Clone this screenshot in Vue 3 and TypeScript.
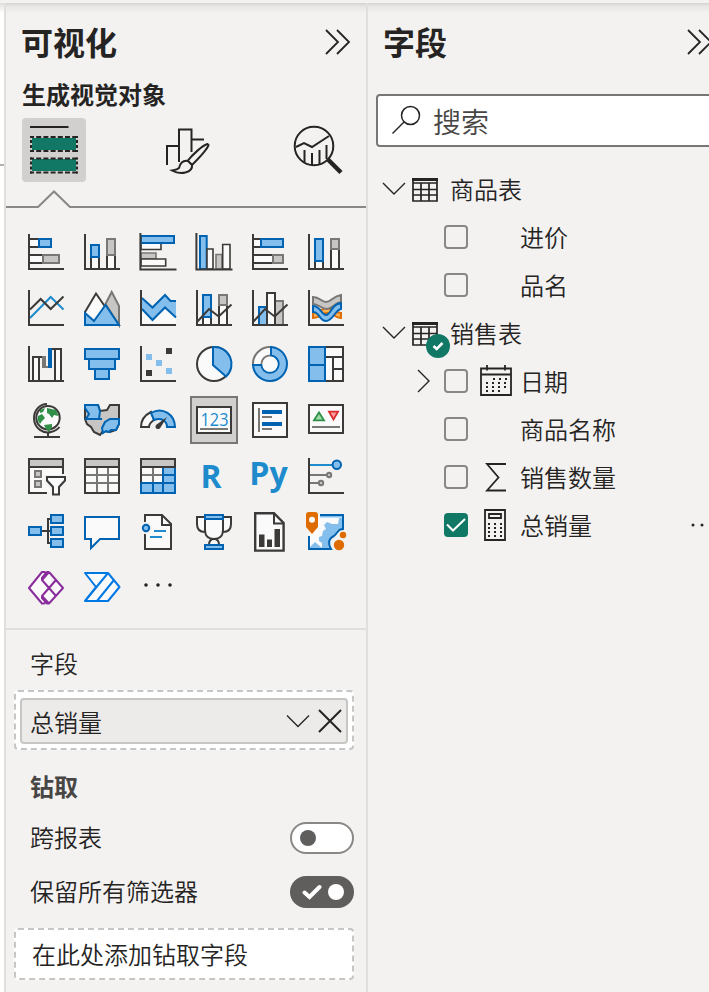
<script setup lang="ts">
import { ref } from 'vue'

type Shape = [cls: string, d: string]
interface Visual {
  name: string
  shapes: Shape[]
  label?: { text: string; x: number; y: number; size: number; width: number; weight: number }
}
interface Field {
  name: string
  icon?: 'date' | 'sum' | 'calc'
  expandable?: boolean
  checked?: boolean
}
interface Table {
  name: string
  used: boolean
  fields: Field[]
}

const box = (x1: number, y1: number, x2: number, y2: number): string =>
  `M${x1} ${y1}H${x2}V${y2}H${x1}Z`
const dot = (x: number, y: number, r: number): string =>
  `M${x - r} ${y}a${r} ${r} 0 1 0 ${2 * r} 0a${r} ${r} 0 1 0 ${-2 * r} 0Z`
const axis: Shape = ['dark', 'M7 6V41H42']
const axisWide: Shape = ['dark', 'M6.4 5V41.5H42.5']

const visuals: Visual[] = [
  { name: 'stacked-bar', shapes: [['dark white', box(7, 11, 17, 19)], ['blue', box(17, 11, 29, 19)], ['dark white', box(7, 27, 21, 35)], ['grey', box(21, 27, 37, 35)], axis] },
  { name: 'stacked-column', shapes: [['dark white', box(13, 29, 21, 41)], ['blue', box(13, 17, 21, 29)], ['dark white', box(29, 27, 37, 41)], ['grey', box(29, 11, 37, 27)], axis] },
  { name: 'clustered-bar', shapes: [['dark white thin', box(7, 15, 27, 21.5)], ['grey thin', box(7, 25, 22, 31)], ['dark white thin', box(7, 31, 31.7, 38)], ['blue', box(7, 8, 40, 15)], axisWide] },
  { name: 'clustered-column', shapes: [['blue', box(10, 8, 16.7, 41)], ['dark white thin', box(17, 21, 23, 41)], ['grey thin', box(26, 26.5, 32, 41)], ['dark white thin', box(32.7, 16.5, 40, 41)], axisWide] },
  { name: 'full-bar', shapes: [['dark white', box(7, 11, 15, 19)], ['blue', box(15, 11, 37, 19)], ['dark white', box(7, 27, 27, 35)], ['grey', box(27, 27, 37, 35)], axis] },
  { name: 'full-column', shapes: [['dark white', box(13, 33, 21, 41)], ['blue', box(13, 11, 21, 33)], ['dark white', box(29, 21, 37, 41)], ['grey', box(29, 11, 37, 21)], axis] },

  { name: 'line', shapes: [['sky', 'M8 34L28.7 13L41.5 25.5'], ['dark', 'M8 25.5L18.7 15L28.7 25L41.5 12.5'], axis] },
  { name: 'area', shapes: [['dark white', 'M7 41V28L18 9.5L28 24V41Z'], ['grey', 'M27.5 20L33.7 8L41 22V41Z'], ['blue', 'M7 41V29L16 37L27.5 21L41 41Z']] },
  { name: 'stacked-area', shapes: [['plain', 'M8 25L18.5 36L31 23.5L42 33.5V41H8Z'], ['light', 'M8 14L18.5 23.5L31 11L37 17H42V33.5L31 23.5L18.5 36L8 25Z'], ['navy', 'M8 14L18.5 23.5L31 11L36.5 17H42M8 25L18.5 36L31 23.5L42 33.5'], axis] },
  { name: 'line-stacked-column', shapes: [['dark white', box(13, 33, 21, 41)], ['blue', box(13, 11, 21, 33)], ['dark white', box(29, 21, 37, 41)], ['grey', box(29, 11, 37, 21)], ['dark', 'M7 38L19 25L28.7 32.5L41.5 20.5'], axis] },
  { name: 'line-clustered-column', shapes: [['blue', box(13, 23, 21, 41)], ['grey', box(29, 17, 37, 41)], ['dark white', box(21, 9, 29, 41)], ['dark', 'M7 38L19 25L28.7 32.5L41.5 20.5'], axis] },
  { name: 'ribbon', shapes: [['orange', 'M11 29C18 29 19 24 25 24S32 29 39 29V34C33 34 31 29 25 29S19 34 11 34Z'], ['grey', 'M11 13C18 13 19 18 24 18S31 12 39 11V18C32 19 31 25 25 25S17 20 11 20Z'], ['blue', 'M11 22C19 22 19 31 24 31S29 20 39 19V25C33 26 31 37 24 37S18 28 11 28Z'], axis] },

  { name: 'waterfall', shapes: [['dark white', box(11, 17, 17, 41)], ['grey-solid', 'M20 16H24V26H26V28H20Z'], ['blue-solid', box(26, 8, 30, 28)], ['dark white', box(33, 9, 39, 41)], ['dark', 'M30 9H33M17 17H20'], axis] },
  { name: 'funnel', shapes: [['blue', box(7, 9, 41, 19)], ['blue', box(11, 19, 37, 29)], ['blue', box(17, 29, 31, 39)]] },
  { name: 'scatter', shapes: [['dark-solid', box(32, 8, 38, 14) + box(12, 30, 18, 36)], ['light', box(12, 14, 18, 20) + box(22, 20, 28, 26) + box(32, 28, 38, 34)], axis] },
  { name: 'pie', shapes: [['dark white', dot(24, 24, 17)], ['blue', 'M23 7A17 17 0 0 1 36 36.5L23 25Z']] },
  { name: 'donut', shapes: [['grey-line white', 'M7 25A17 17 0 0 1 25 7V15.5A8.7 8.7 0 0 0 15.5 25Z'], ['blue', 'M25 7A17 17 0 1 1 7 25H15.3A8.7 8.7 0 1 0 25 15.5Z'], ['plain', dot(24, 24, 7.6)]] },
  { name: 'treemap', shapes: [['dark white', box(7, 7, 41, 41)], ['dark', 'M24 17H41M31 17V41M31 29H41'], ['blue', box(7, 7, 23, 25)], ['blue', box(7, 25, 23, 41)]] },

  { name: 'map', shapes: [['dark white', dot(26, 21.7, 11.7)], ['green-solid', 'M25 12L34 14L36.5 20L32 19L30 22L27 18L25 17ZM16 20L20 18L23 22L20 25L18 28L15.5 24ZM22 29L30 28L30 31L27 36L24 33ZM18 14L23 12L21 16L18 17Z'], ['dark', 'M25 8C17 8 12 15 12 22C12 33 22 38 29 36C33 35 36 33 37.5 31M26 37V41M12 41H38']] },
  { name: 'filled-map', shapes: [['dark grey-fill', 'M7 9H20L22 15L29 14L32 9H41V28L38 34L32 36L25 35L22 39L16 36L13 31L9 28L7 23Z'], ['blue', 'M7 9H20L22 15L21 23H8L11 18L7 12Z'], ['blue', 'M41 23V28L38 34L33 34L31 36L28 35L25 37L24 32L27 26L32 23Z'], ['navy', 'M8 23H24']] },
  { name: 'gauge', shapes: [['dark white', 'M7 31C7 24 11 19 17 16L20 24C17 26 15 28 15 31Z'], ['blue', 'M17 17C29 10 41 19 41 31H33C33 25 27 21 20 24Z'], ['dark-solid', 'M33 21L26.5 31.5C25 34.5 20 33 22 29Z']] },
  { name: 'card', shapes: [['dark white', box(7, 11, 41, 37)], ['grey-line', 'M10 33H38']], label: { text: '123', x: 10.5, y: 30, size: 18.5, width: 28, weight: 400 } },
  { name: 'multi-row-card', shapes: [['dark white', box(7, 7, 41, 41)], ['grey-line', 'M13 12V36M16 21H26M16 33H26'], ['blue-solid', box(16, 14, 36, 18) + box(16, 26, 36, 30)]] },
  { name: 'kpi', shapes: [['dark white', box(7, 9, 41, 37)], ['green', 'M12 24.3L17 16.5L22 24.3Z'], ['red', 'M27 15.7H36L31.5 23.5Z'], ['grey-line', 'M10 31H38']] },

  { name: 'slicer', shapes: [['plain', box(8, 8, 40, 40)], ['grey-tint', box(8, 8, 40, 14)], ['dark', 'M41 22V7H7V41H25M7 15H41'], ['grey', box(13, 19, 19, 25)], ['grey', box(13, 29, 19, 35)], ['halo', 'M25 26H43V28.5L37 35V43H31V35L25 28.5Z'], ['dark white', 'M25 25H43V28.5L37 35V42.5H31V35L25 28.5Z']] },
  { name: 'table', shapes: [['plain', box(7, 7, 41, 41)], ['grey-tint', box(8, 8, 40, 14)], ['grey-line', 'M19 15V40M30 15V40M8 23H40M8 31H40'], ['dark', box(7, 7, 41, 41) + 'M7 15H41']] },
  { name: 'matrix', shapes: [['plain', box(7, 7, 41, 41)], ['grey-tint', box(8, 8, 40, 14)], ['grey-line', 'M19 15V31M8 23H30'], ['dark', box(7, 7, 41, 41) + 'M7 15H41'], ['light', 'M30 16H41V41H7V31H30Z'], ['navy', 'M29 16V41M19 31V41M7 31H41M29 23H41M41 16V41H7V31']] },
  { name: 'r-script', shapes: [], label: { text: 'R', x: 10.6, y: 36, size: 32.5, width: 21, weight: 700 } },
  { name: 'python', shapes: [], label: { text: 'Py', x: 3.2, y: 32.5, size: 32, width: 38.500, weight: 700 } },
  { name: 'key-influencers', shapes: [['sky', 'M8 13H31'], ['blue', dot(34.8, 12.8, 4.2)], ['grey-line', 'M8 23H25M8 31H17'], ['grey', dot(27, 23, 2.2)], ['grey', dot(19, 31, 2.2)], axis] },

  { name: 'decomposition', shapes: [['dark', 'M20 23H29M29 11H26V35H29'], ['blue', box(7, 19, 19, 27)], ['blue', box(29, 7, 41, 15)], ['blue', box(29, 19, 41, 27)], ['blue', box(29, 31, 41, 39)]] },
  { name: 'qna', shapes: [['navy white', 'M7 9H41V31H22L13 40V31H7Z']] },
  { name: 'narrative', shapes: [['dark white', 'M11 7H28L37 16V41H11Z'], ['dark', 'M28 7V17H37'], ['halo-fill', dot(12, 20, 6.2)], ['blue', dot(12, 20, 3.2)], ['sky', 'M20 23H32M16 29H28']] },
  { name: 'metrics', shapes: [['dark white', 'M15 9H7V16C7 22 10 24 15 24M33 9H41V16C41 22 38 24 33 24'], ['dark white', 'M19 37C19 33 21 31 24 31S29 33 29 37'], ['dark white', 'M15 11V22C15 29 20 31 24 31S33 29 33 22V11Z'], ['blue', box(15, 7, 33, 11)], ['blue', box(15, 37, 33, 41)]] },
  { name: 'paginated', shapes: [['dark white heavy', 'M9.2 5.2H28L37.6 15V42.6H9.2Z'], ['dark', 'M28 5V15.5H37.6'], ['dark-solid', box(13, 26.5, 18.5, 39) + box(21, 31.5, 26, 39) + box(28.5, 21, 34, 39)]] },
  { name: 'arcgis', shapes: [['plain', 'M18 7H41V21L26 36V41H7V26Z'], ['light', 'M20 41L20 35L17 33L17 29L20 28L21 23L24 21L22 17L25 14L30 16L36 16L37 10H41V21L35 22L33 27L28 30L27 36L29 41Z'], ['light', 'M8 39L13 34L20 40V41H8Z'], ['light', box(18, 7, 41, 9.5)], ['navy', 'M18 7H41V21C35 21 36 25 32 28C26 31 26 36 29 41H7V28'], ['orange-solid', 'M4 7Q4 4 7 4H13Q16 4 16 7V19L10 26L4 19Z' + dot(41, 27, 3.2) + dot(37, 37, 5.2)], ['plain', dot(10, 11.8, 3)]] },

  { name: 'power-apps', shapes: [['purple white', 'M24 9L22 8H20L7 24L20 39.5H22L24 38'], ['purple white', 'M27 8L41 24L27 39.5L20 32L34 16M27 8L20 16L34 32M27 8H25L20 14V16M20 32V34L25 39.5H27']] },
  { name: 'power-automate', shapes: [['azure white', 'M7 9H30L41.5 23L30 37H7L18 23Z'], ['azure', 'M30 9L7 37M36 16L19 37']] },
  { name: 'more', shapes: [['ink-solid', dot(12, 21, 1.8) + dot(24, 21, 1.8) + dot(36, 21, 1.8)]] },
]

const selected = ref('card')
const keepFilters = ref(true)
const crossReport = ref(false)

const tables = ref<Table[]>([
  { name: '商品表', used: false, fields: [{ name: '进价' }, { name: '品名' }] },
  {
    name: '销售表',
    used: true,
    fields: [
      { name: '日期', icon: 'date', expandable: true },
      { name: '商品名称' },
      { name: '销售数量', icon: 'sum' },
      { name: '总销量', icon: 'calc', checked: true },
    ],
  },
])
</script>

<template>
  <div class="app">
    <div class="topbar"></div>
    <div class="panes">
      <div class="canvas-edge"><div class="canvas-line"></div></div>

      <section class="pane visuals">
        <header class="pane-head">
          <h1>可视化</h1>
          <svg class="collapse" viewBox="0 0 26 26"><path d="M1 1L13 13L1 25M12 1L24 13L12 25" /></svg>
        </header>
        <h2>生成视觉对象</h2>

        <nav class="tabs">
          <button class="tab active">
            <svg viewBox="0 0 64 64">
              <path class="t-bar" d="M8 9H46.500" />
              <path class="t-green" d="M10 20H54V32H10ZM10 41H54V53H10Z" />
              <path class="t-dash" d="M8 19H56M8 33H56M8 40.500H56M8 54.500H56" />
              <path class="t-dash side" d="M9 18V34M55 18V34M9 39.500V55.500M55 39.500V55.500" />
            </svg>
          </button>
          <button class="tab">
            <svg viewBox="0 0 64 64">
              <path class="t-line" d="M14 47V28H26M26 44V11.500H38.500V34M38.500 21.500H51" />
              <path class="t-line body" d="M54.500 26C50 27 39 37 34.500 43L39 47C45 41 54.500 31 55.500 27Z" />
              <path class="t-line body" d="M35 43C29 42 27 46 26 50C24 52 22 52 19 52.500C27 57 40 55 39 47Z" />
            </svg>
          </button>
          <button class="tab">
            <svg viewBox="0 0 64 64">
              <circle class="t-line" cx="28" cy="28" r="19.300" />
              <path class="t-line" d="M10 29L18 25L26 29L43 18M18.500 32V44M26 35V47M33.500 32V46M40.500 27V41" />
              <path class="t-thick" d="M41.500 41L55 54.500" />
            </svg>
          </button>
        </nav>
        <svg class="notch" viewBox="0 0 360 20"><path d="M0 17H32L48 1.500L64 17H360" /></svg>

        <div class="gallery">
          <button
            v-for="v in visuals"
            :key="v.name"
            class="visual"
            :class="{ selected: v.name === selected }"
            @click="selected = v.name"
          >
            <svg viewBox="0 0 48 48">
              <path v-for="(s, i) in v.shapes" :key="i" :class="s[0]" :d="s[1]" />
              <text
                v-if="v.label"
                :x="v.label.x"
                :y="v.label.y"
                :font-size="v.label.size"
                :font-weight="v.label.weight"
                :textLength="v.label.width"
                lengthAdjust="spacingAndGlyphs"
              >{{ v.label.text }}</text>
            </svg>
          </button>
        </div>

        <div class="wells">
          <div class="well-label">字段</div>
          <div class="dropzone filled">
            <div class="chip">
              <span>总销量</span>
              <svg class="chip-down" viewBox="0 0 24 24"><path d="M1 6.500L12 17.500L23 6.500" /></svg>
              <svg class="chip-close" viewBox="0 0 24 24"><path d="M1 1L23 23M23 1L1 23" /></svg>
            </div>
          </div>
          <h3>钻取</h3>
          <div class="switch-row">
            <span>跨报表</span>
            <button class="switch" @click="crossReport = !crossReport"><i class="knob"></i></button>
          </div>
          <div class="switch-row second">
            <span>保留所有筛选器</span>
            <button class="switch on" @click="keepFilters = !keepFilters">
              <svg viewBox="0 0 20 16"><path d="M2.500 8.500L7.500 13L17.500 3" /></svg>
              <i class="knob"></i>
            </button>
          </div>
          <div class="dropzone empty">在此处添加钻取字段</div>
        </div>
      </section>

      <section class="pane fields">
        <header class="pane-head">
          <h1>字段</h1>
          <svg class="collapse" viewBox="0 0 26 26"><path d="M1 1L13 13L1 25M12 1L24 13L12 25" /></svg>
        </header>
        <div class="search">
          <svg viewBox="0 0 30 30"><circle cx="19.500" cy="10.500" r="9" /><path d="M13 17L1.500 28.500" /></svg>
          <span>搜索</span>
        </div>
        <template v-for="t in tables" :key="t.name">
          <div class="row table-row">
            <svg class="chev" viewBox="0 0 24 24"><path d="M1 6L12 17L23 6" /></svg>
            <span class="table-icon">
              <svg viewBox="0 0 26 24">
                <path class="tb" d="M1 1H25V23H1ZM1 5H25M1 11.500H25M1 17H25M9 5V23M17 5V23" />
                <path class="tb-top" d="M0 1.500H26" />
              </svg>
              <svg v-if="t.used" class="badge" viewBox="0 0 24 24">
                <circle cx="12" cy="12" r="12" /><path d="M7.500 12L10.700 15L16.500 9" />
              </svg>
            </span>
            <span class="name">{{ t.name }}</span>
          </div>
          <div v-for="f in t.fields" :key="f.name" class="row field-row">
            <svg class="chev" viewBox="0 0 24 24"><path v-if="f.expandable" d="M6 1L17 12L6 23" /></svg>
            <span class="check" :class="{ checked: f.checked }">
              <svg v-if="f.checked" viewBox="0 0 24 24"><path d="M3 11.500L9 17.500L21 6" /></svg>
            </span>
            <svg class="kind" viewBox="0 0 32 32">
              <template v-if="f.icon === 'date'">
                <path class="k2" d="M1 3.500H31V30H1ZM1 9.500H31M7 0V5.500M25 0V5.500" />
                <path class="dots" d="M13 14H27M6 18H27M6 22H27M6 26H21" />
              </template>
              <path v-else-if="f.icon === 'sum'" class="k2" d="M26 3H7L18.500 16.500L7 29.500H26" />
              <template v-else-if="f.icon === 'calc'">
                <path class="k2" d="M5 1H25V31H5ZM9 5H21V9H9Z" />
                <path class="dots" d="M8 15H23M8 19H23M8 23H23M8 27H23" />
              </template>
            </svg>
            <span class="name">{{ f.name }}</span>
            <svg v-if="f.checked" class="row-more" viewBox="0 0 32 8">
              <circle cx="5" cy="4" r="1.500" /><circle cx="14" cy="4" r="1.500" /><circle cx="23" cy="4" r="1.500" />
            </svg>
          </div>
        </template>
      </section>
    </div>
  </div>
</template>

<style>
body {
  margin: 0;
  overflow: hidden;
  background: #f3f2f1;
}
</style>

<style scoped>
.app {
  width: 709px;
  height: 992px;
  overflow: hidden;
  background: #f3f2f1;
  color: #252423;
  font: 350 24px/36px "Noto Sans CJK SC DemiLight", "Noto Sans CJK SC", sans-serif;
}
.topbar { height: 3px; }
.panes {
  display: flex;
  height: 989px;
  background: linear-gradient(#d4d3d2, #e6e5e4 3px, rgba(243, 242, 241, 0) 10px);
}
svg { display: block; fill: none; }
button { padding: 0; border: 0; background: none; flex: none; }
h1, h2, h3 { margin: 0; font-weight: 700; font-family: "Noto Sans CJK SC", sans-serif; }
h1 { font-size: 32px; line-height: 48px; margin-left: -1px; }
h2 { font-size: 24px; line-height: 36px; margin: 10px 0 0 16px; }
h3 { font-size: 24px; line-height: 36px; color: #484644; margin: 18px 0 0 24px; }

.canvas-edge {
  width: 4px;
  flex: none;
  padding-top: 161px;
  box-sizing: border-box;
  background: linear-gradient(#dededd, #fff 10px);
}
.canvas-line { height: 2px; background: #b3b0ad; }
.pane { box-sizing: border-box; flex: none; border-left: 2px solid #e1dfdd; }
.visuals { width: 362px; }
.fields { width: 343px; }
.pane-head {
  display: flex;
  align-items: flex-start;
  justify-content: space-between;
  height: 63px;
  box-sizing: border-box;
  padding: 14px 15px 0 16px;
}
.collapse { width: 26px; height: 26px; flex: none; margin-top: 12px; stroke: #252423; stroke-width: 1.8; }
.fields .pane-head { height: 64px; padding-right: 0; }
.fields .collapse { margin-right: -4px; }

.tabs { display: flex; justify-content: space-between; padding: 0 16px; margin-top: 6px; height: 64px; }
.tab { width: 64px; height: 64px; border-radius: 4px; }
.tab.active { background: #d2d0ce; }
.t-bar { stroke: #252423; stroke-width: 2; }
.t-green { fill: #117865; }
.t-dash { stroke: #252423; stroke-width: 2; stroke-dasharray: 5 2.2; stroke-dashoffset: 1; }
.t-dash.side { stroke-dasharray: 3 2; }
.t-line { stroke: #252423; stroke-width: 2; }
.t-line.body { fill: #f3f2f1; }
.t-thick { stroke: #252423; stroke-width: 4.500; }
.tab + .tab svg { margin-left: -1px; margin-right: 1px; }
.tab:last-child svg { margin: 0; }
.notch { width: 360px; height: 20px; margin-top: 8px; stroke: #8a8886; stroke-width: 2; }

.gallery {
  display: grid;
  grid-template-columns: repeat(6, 48px);
  gap: 8px;
  padding: 18px 16px 16px;
  border-bottom: 2px solid #e1dfdd;
}
.visual { width: 48px; height: 48px; box-sizing: border-box; }
.visual svg { width: 48px; height: 48px; overflow: visible; }
.visual.selected { background: #d2d0ce; border: 2px solid #797775; }
.visual.selected svg { margin: -2px; }
.visual text { fill: #1e8bcd; font-family: "Open Sans", "Noto Sans", sans-serif; }

.dark { stroke: #3b3a38; stroke-width: 2; }
.white { fill: #fafafa; }
.thin { stroke-width: 1.6; }
.heavy { stroke-width: 2.400; }
.blue { stroke: #0063b1; stroke-width: 2; fill: #83beec; }
.grey { stroke: #797774; stroke-width: 2; fill: #c8c6c4; }
.grey.thin { stroke-width: 1.600; }
.orange { stroke: #de6c00; stroke-width: 2; fill: #ffb04f; }
.green { stroke: #309048; stroke-width: 1.800; fill: #a1dba9; }
.red { stroke: #d92c2c; stroke-width: 1.800; fill: #ff9a9a; }
.sky { stroke: #1e8bcd; stroke-width: 2; }
.navy { stroke: #0063b1; stroke-width: 2; }
.azure { stroke: #0078e4; stroke-width: 2; stroke-linejoin: round; }
.purple { stroke: #8a2d9c; stroke-width: 2; stroke-linejoin: round; }
.grey-line { stroke: #797774; stroke-width: 2; }
.halo { stroke: #f3f2f1; stroke-width: 6; fill: #f3f2f1; }
.halo-fill { fill: #f3f2f1; }
.plain { fill: #fafafa; }
.light { fill: #83beec; }
.grey-tint, .grey-fill { fill: #c8c6c4; }
.grey-solid { fill: #797774; }
.blue-solid { fill: #0063b1; }
.dark-solid { fill: #3b3a38; }
.green-solid { fill: #309048; }
.orange-solid { fill: #de6c00; }
.ink-solid { fill: #252423; }

.well-label { margin: 15px 0 9px 24px; }
.dropzone { box-sizing: border-box; width: 340px; margin-left: 8px; border: 2px dashed #c8c6c4; border-radius: 4px; background: #fff; }
.dropzone.filled { height: 60px; padding: 6px 4px 4px; }
.chip {
  display: flex;
  align-items: center;
  box-sizing: border-box;
  width: 328px;
  height: 46px;
  padding: 0 4px 0 8px;
  border: 2px solid #c8c6c4;
  border-radius: 4px;
  background: #edebe9;
}
.chip span { flex: 1; padding-top: 1px; }
.chip svg { width: 24px; height: 24px; stroke: #252423; }
.chip-down { margin-right: 8px; stroke-width: 1.300; }
.chip-close { stroke-width: 2; }
.switch-row { display: flex; align-items: center; justify-content: space-between; height: 32px; padding: 0 12px 0 24px; margin-top: 18px; }
.switch-row span { margin-top: -2px; }
.switch-row.second { margin-top: 22px; }
.switch { display: flex; align-items: center; box-sizing: border-box; width: 64px; height: 32px; padding-left: 8px; border: 2px solid #8a8886; border-radius: 16px; background: #fff; }
.knob { width: 16px; height: 16px; border-radius: 50%; background: #605e5c; }
.switch.on { background: #605e5c; border-color: #605e5c; padding-left: 10px; }
.switch.on .knob { background: #fff; margin-left: 6px; }
.switch svg { width: 20px; height: 16px; stroke: #fff; stroke-width: 4; stroke-linecap: round; }
.dropzone.empty { height: 52px; margin-top: 20px; padding: 6px 0 0 16px; }

.search {
  display: flex;
  align-items: center;
  box-sizing: border-box;
  width: 345px;
  height: 53px;
  margin: 27px 0 19px 8px;
  padding-left: 13px;
  border: 2px solid #797775;
  border-radius: 4px;
  background: #fff;
  font-size: 28px;
  color: #484644;
}
.search svg { width: 30px; height: 30px; margin: -1px 12px 0 0; stroke: #252423; stroke-width: 1.500; }
.search span { padding-top: 1px; }

.row { display: flex; align-items: center; height: 48px; white-space: nowrap; }
.name { margin-top: -2px; }
.chev { width: 24px; height: 24px; flex: none; margin-top: -3px; stroke: #252423; stroke-width: 1.400; }
.table-row { padding-left: 14px; }
.table-icon { position: relative; width: 26px; height: 24px; margin: -1px 12px 0 6px; }
.table-icon > svg:first-child { width: 26px; height: 24px; }
.tb { stroke: #252423; stroke-width: 1.700; }
.tb-top { stroke: #252423; stroke-width: 3; }
.badge { position: absolute; left: 14px; top: 12px; width: 24px; height: 24px; }
.badge circle { fill: #117865; }
.badge path { stroke: #fff; stroke-width: 2.600; }
.field-row { padding-left: 44px; }
.check { width: 24px; height: 24px; box-sizing: border-box; margin: -2px 12px 0 8px; border: 2px solid #8a8886; border-radius: 4px; flex: none; }
.check.checked { border-color: #117865; background: #117865; }
.check svg { width: 24px; height: 24px; margin: -2px; stroke: #fff; stroke-width: 2; }
.kind { width: 32px; height: 32px; flex: none; margin: -2px 8px 0 0; }
.k2 { stroke: #252423; stroke-width: 1.800; }
.dots { stroke: #252423; stroke-width: 1.800; stroke-dasharray: 2 4; }
.row-more { width: 32px; height: 8px; flex: none; margin: -2px -11px 0 auto; fill: #252423; }
</style>
